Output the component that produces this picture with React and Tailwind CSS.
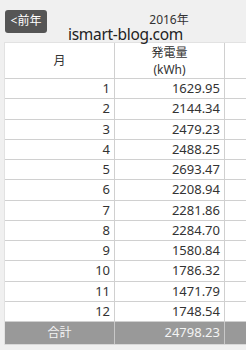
import React from 'react';

const rows = [
  [1, '1629.95'],
  [2, '2144.34'],
  [3, '2479.23'],
  [4, '2488.25'],
  [5, '2693.47'],
  [6, '2208.94'],
  [7, '2281.86'],
  [8, '2284.70'],
  [9, '1580.84'],
  [10, '1786.32'],
  [11, '1471.79'],
  [12, '1748.54'],
];

const font = { fontFamily: '"Noto Sans", "Noto Sans CJK JP", sans-serif' };

export default function App() {
  return (
    <div className="w-[246px] h-[350px] bg-[#f0f0f0] overflow-hidden text-[#333] text-[12px]" style={font}>
      <div className="relative h-[42px] grid grid-cols-[114px_110px_1fr] items-center">
        <div className="pl-[5px]">
          <button className="w-[42px] h-[23px] rounded-[3px] bg-[#555] text-white text-[12px] leading-none flex items-center justify-center">
            &lt;前年
          </button>
        </div>
        <div className="text-center leading-[12px] -mt-[3px]">2016年</div>
        <div />
        <span className="absolute left-[68px] top-[26px] text-[15.5px] leading-[16px] text-[#222] tracking-[-0.3px]">
          ismart-blog.com
        </span>
      </div>

      <div className="ml-[4px] border-t border-l border-[#e2e2e2] bg-white">
        <div className="grid grid-cols-[110px_110px_1fr] h-[36px] border-b border-[#d0d0d0]">
          <div className="border-r border-[#d0d0d0] flex items-center justify-center">月</div>
          <div className="border-r border-[#d0d0d0] flex flex-col items-center justify-center leading-[17px]">
            <span>発電量</span>
            <span>(kWh)</span>
          </div>
          <div />
        </div>
        {rows.map(([m, v]) => (
          <div key={m} className="grid grid-cols-[110px_110px_1fr] h-[20.25px] border-b border-[#d0d0d0]">
            <div className="border-r border-[#d0d0d0] flex items-center justify-end pr-[4px] text-[13px]">{m}</div>
            <div className="border-r border-[#d0d0d0] flex items-center justify-end pr-[4px] text-[13px]">{v}</div>
            <div />
          </div>
        ))}
        <div className="grid grid-cols-[110px_110px_1fr] h-[23px] bg-[#999] text-[#f4f4f4] border-b border-[#d8d8d8]">
          <div className="border-r border-[#c8c8c8] flex items-center justify-center">合計</div>
          <div className="border-r border-[#c8c8c8] flex items-center justify-end pr-[4px] text-[13px]">24798.23</div>
          <div />
        </div>
      </div>
    </div>
  );
}
